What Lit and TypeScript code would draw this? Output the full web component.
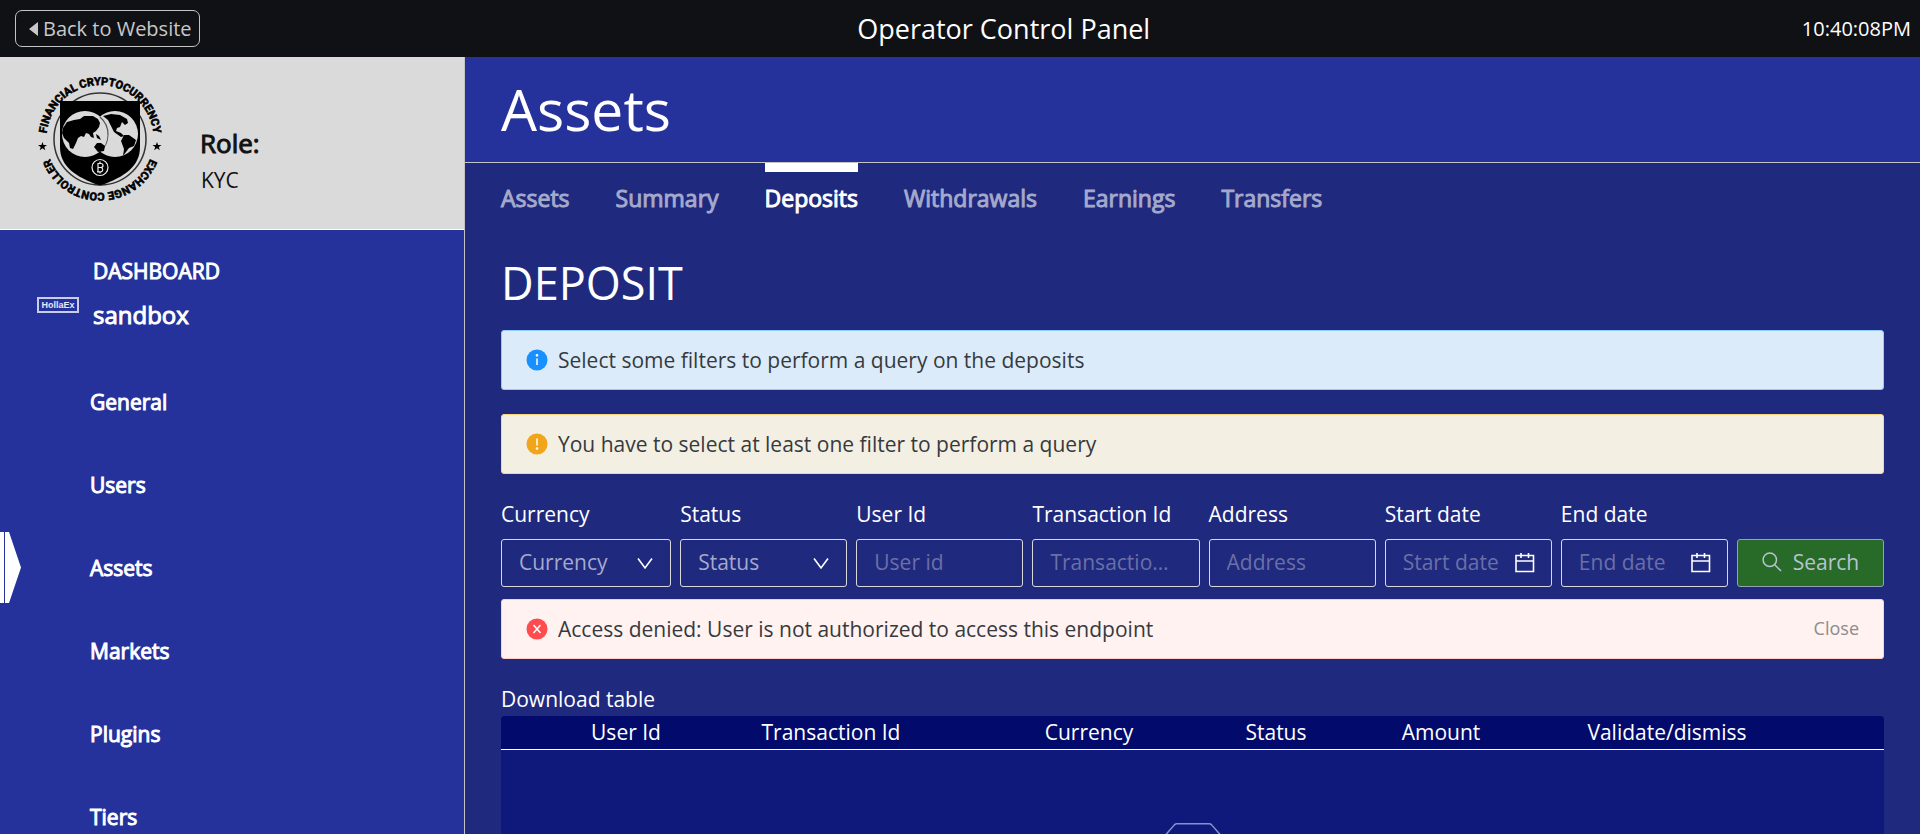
import { LitElement, html, css, svg, nothing } from "lit";
import { customElement, state } from "lit/decorators.js";
import { classMap } from "lit/directives/class-map.js";

const NAV = ["General", "Users", "Assets", "Markets", "Plugins", "Tiers"];
const TABS = ["Assets", "Summary", "Deposits", "Withdrawals", "Earnings", "Transfers"];
const COLUMNS = [
  { title: "", width: 61 },
  { title: "User Id", width: 128 },
  { title: "Transaction Id", width: 282 },
  { title: "Currency", width: 234 },
  { title: "Status", width: 140 },
  { title: "Amount", width: 190 },
  { title: "Validate/dismiss", width: 262 },
  { title: "", width: 86 },
];

type Filter = { id: string; label: string; hint: string; kind: "select" | "text" | "date" };
const FILTERS: Filter[] = [
  { id: "currency", label: "Currency", hint: "Currency", kind: "select" },
  { id: "status", label: "Status", hint: "Status", kind: "select" },
  { id: "user", label: "User Id", hint: "User id", kind: "text" },
  { id: "transaction", label: "Transaction Id", hint: "Transaction Id", kind: "text" },
  { id: "address", label: "Address", hint: "Address", kind: "text" },
  { id: "start", label: "Start date", hint: "Start date", kind: "date" },
  { id: "end", label: "End date", hint: "End date", kind: "date" },
];

const chevron = html`<svg class="glyph" width="18" height="18" viewBox="0 0 18 18" aria-hidden="true">
  <path d="M2 4.5 9 14 16 4.5" fill="none" stroke="#fff" stroke-width="1.6" />
</svg>`;

const calendar = html`<svg class="glyph" width="20" height="20" viewBox="0 0 20 20" aria-hidden="true">
  <path d="M1 2.500H18.500V18.500H1ZM1 8H18.500M6 0V5M13.500 0V5" fill="none" stroke="#fff" stroke-width="1.6" />
</svg>`;

const magnifier = html`<svg width="20" height="20" viewBox="0 0 20 20" aria-hidden="true">
  <path d="M12.700 12.700 19 19M14.500 7.700A6.700 6.700 0 1 1 1.100 7.700 6.700 6.700 0 0 1 14.500 7.700Z" fill="none" stroke="currentColor" stroke-width="1.500" />
</svg>`;

const MARKS = {
  info: svg`<path d="M11 9.500V16" /><circle cx="11" cy="6.300" r=".6" />`,
  warning: svg`<path d="M11 5.500V12.500" /><circle cx="11" cy="15.500" r=".6" />`,
  error: svg`<path d="M7.500 7 14.500 15M14.500 7 7.500 15" />`,
};

const seal = html`<svg class="seal" width="126" height="126" viewBox="0 0 126 126" role="img" aria-label="Exchange seal">
  <defs>
    <path id="ring" d="M10.100 72A53.700 53.700 0 1 1 115.900 72" />
    <path id="ring-low" d="M115.900 54A53.700 53.700 0 1 1 10.100 54" />
  </defs>
  <circle cx="63" cy="63" r="46" fill="none" stroke="#333" stroke-width="1.500" />
  <path d="M23 25H103V71C103 90 88 101 63 109.500 38 101 23 90 23 71Z" fill="#000" />
  <circle cx="48" cy="58" r="23" fill="#dadada" />
  <circle cx="78" cy="58" r="23" fill="#dadada" />
  <path d="M71 59A23 23 0 0 0 63 41" fill="none" stroke="#555" stroke-width="1.200" />
  <path d="M71 59A23 23 0 0 1 63 76" fill="none" stroke="#555" stroke-width="1" />
  <path d="M26 52 30 46 37 44 43 43 47 40 56 40 61 43 63 47 62 51 59 55 56 57 57 62 54 61 52 58 49 57 47 61 44 60 41 62 39 67 36 73 33 72 32 67 27 62 25 57Z" />
  <path d="M57 71 60 67 64 67 68 70 67 75 61 76Z" />
  <path d="M59 58 62 60 64 64 60 62Z" />
  <path d="M66 40 74 38 83 39 90 43 91 47 88 49 85 46 83 51 80 52 79 55 84 57 87 60 84 61 77 56 74 50 71 44Z" />
  <path d="M87 59 92 59 99 64 97 70 92 72 86 80 87 73 84 65Z" />
  <circle cx="63" cy="91.500" r="8" fill="none" stroke="#eee" stroke-width="1.200" />
  <path d="M61 87V96M61 87.500H64A2 2 0 0 1 64 91.500H61M64 91.500A2.200 2.200 0 0 1 64 95.800H60M63 85.500V87M63 96V97.500" fill="none" stroke="#eee" stroke-width="1.200" />
  <path d="M5.500 66 6.600 69H10L7.300 71 8.300 74.200 5.500 72.300 2.700 74.200 3.700 71 1 69H4.400Z" />
  <path d="M120 66 121.100 69H124.500L121.800 71 122.800 74.200 120 72.300 117.200 74.200 118.200 71 115.500 69H118.900Z" />
  <text text-anchor="middle"><textPath href="#ring" startOffset="50%">FINANCIAL CRYPTOCURRENCY</textPath></text>
  <text text-anchor="middle"><textPath href="#ring-low" startOffset="50%">EXCHANGE CONTROLLER</textPath></text>
</svg>`;

@customElement("app-root")
export class AppRoot extends LitElement {
  @state() private page = "Assets";
  @state() private tab = "Deposits";
  @state() private errorShown = true;

  static styles = css`
    :host {
      display: flex;
      flex-direction: column;
      height: 100vh;
      overflow: hidden;
      background: #1f297e;
      color: #fff;
      font: 400 21px/32px "Open Sans", "Noto Sans", sans-serif;
    }
    * { box-sizing: border-box; }
    h1, h2, p { margin: 0; font-weight: 400; }
    a { color: inherit; text-decoration: none; }
    button, input, select { font: inherit; color: inherit; margin: 0; }

    .topbar {
      flex: none;
      display: flex;
      align-items: center;
      justify-content: space-between;
      height: 57px;
      padding: 0 9px 0 15px;
      background: #101115;
    }
    .back {
      display: flex;
      align-items: center;
      gap: 5px;
      height: 37px;
      padding: 0 7px 0 13px;
      border: 1px solid #c4c4c4;
      border-radius: 7px;
      color: #c8c8c8;
      font-size: 20px;
    }
    .brand { padding-left: 6px; font-size: 27px; }
    .clock { font-size: 20px; }

    .frame { flex: 1; min-height: 0; display: flex; }
    .side {
      flex: none;
      width: 465px;
      overflow: hidden;
      border-right: 1px solid #c4c4c4;
      background: #26329b;
    }
    .role {
      display: flex;
      gap: 37px;
      height: 173px;
      padding: 19px 37px;
      border-bottom: 1px solid #fff;
      background: #dadada;
      color: #111;
    }
    .seal text { font: 700 11px "Roboto", sans-serif; stroke: #000; stroke-width: .6px; }
    .who { padding-top: 49px; }
    .who strong { display: block; font-size: 26px; font-weight: 400; line-height: 36px; -webkit-text-stroke: 1px; }
    .who span { display: block; padding-left: 1px; line-height: 38px; }
    .heavy { -webkit-text-stroke: 1px; }
    .site { display: flex; align-items: center; gap: 14px; height: 130px; padding: 0 37px; }
    .site p { line-height: 44px; }
    .site .name { font-size: 24px; }
    .titles { padding-bottom: 4px; }
    .badge {
      margin-top: 20px;
      padding: 0 2px;
      border: 2px solid #c9cdea;
      color: #e6e8f6;
      font: 700 9px/12px "Liberation Sans", sans-serif;
      width: 42px;
      text-align: center;
      white-space: nowrap;
    }
    .nav a { display: flex; align-items: center; height: 83px; padding-left: 90px; position: relative; }
    .nav svg { position: absolute; left: 0; }

    .main { flex: 1; min-width: 0; overflow: hidden; }
    .title { padding: 14px 36px 15px; border-bottom: 1px solid #c4c4c4; background: #26329b; font-size: 57px; line-height: 76px; }
    .tabs { display: flex; gap: 46px; padding: 0 36px; font-size: 23px; }
    .tabs a { padding-top: 10px; border-top: 9px solid transparent; color: #a5a9cb; }
    .tabs a.on { border-color: #fff; color: #fff; }
    .content { padding: 37px 36px 0; }
    .content h2 { font-size: 45px; line-height: 64px; margin-bottom: 15px; }

    .note {
      display: flex;
      align-items: center;
      gap: 10px;
      height: 60px;
      padding: 0 24px;
      border: 1px solid;
      border-radius: 3px;
      color: #363a40;
    }
    .note + .note { margin-top: 24px; }
    .note svg { stroke: #fff; stroke-width: 1.500px; }
    .info { background: #dcebf9; border-color: #91caff; }
    .warning { background: #f3efe2; border-color: #fbd77c; }
    .error { background: #fff2f0; border-color: #ffccc7; margin-top: 12px; }
    .close { margin-left: auto; padding: 0 0 2px; border: 0; background: none; color: #8c8c8c; font-size: 18px; }

    .filters {
      display: grid;
      grid-template-columns: 170fr repeat(6, 167fr) 147px;
      align-items: end;
      gap: 9px;
      margin-top: 24px;
    }
    .field { min-width: 0; }
    .field label { display: block; margin-bottom: 9px; }
    .box { position: relative; display: flex; align-items: center; }
    .box input, .box select {
      width: 100%;
      height: 48px;
      padding: 0 24px 2px 17px;
      border: 1px solid #d9d9d9;
      border-radius: 3px;
      background: transparent;
      appearance: none;
      text-overflow: ellipsis;
    }
    .box select { color: #a5a9cb; }
    .box input::placeholder { color: #6a70a6; opacity: 1; }
    .box .date { padding-right: 44px; }
    .glyph { position: absolute; right: 17px; pointer-events: none; }
    .search {
      display: flex;
      align-items: center;
      justify-content: center;
      gap: 11px;
      height: 48px;
      padding: 0 0 2px;
      border: 1px solid #93a3b3;
      border-radius: 3px;
      background: #286a28;
      color: #b8c4cf;
    }

    .download { display: block; margin-top: 24px; }
    table { width: 100%; margin-top: 1px; table-layout: fixed; border-collapse: separate; border-spacing: 0; background: #0f197b; border-radius: 4px 4px 0 0; overflow: hidden; }
    th { height: 34px; padding: 0 0 1px; border-bottom: 1px solid #fff; background: #020b6b; font-weight: 400; line-height: 30px; white-space: nowrap; }
    td { padding: 72px 0; text-align: center; }
  `;

  private note(kind: keyof typeof MARKS, text: string) {
    const fill = { info: "#1890ff", warning: "#f0a51b", error: "#ff4d4f" }[kind];
    return html`<div class="note ${kind}" role="alert">
      <svg width="22" height="22" viewBox="0 0 22 22" aria-hidden="true">
        <circle cx="11" cy="11" r="10.500" fill=${fill} stroke="none" />${MARKS[kind]}
      </svg>
      <span>${text}</span>
      ${kind === "error"
        ? html`<button class="close" @click=${() => (this.errorShown = false)}>Close</button>`
        : nothing}
    </div>`;
  }

  private field(f: Filter) {
    return html`<div class="field">
      <label for=${f.id}>${f.label}</label>
      <div class="box">
        ${f.kind === "select"
          ? html`<select id=${f.id}><option>${f.hint}</option></select>${chevron}`
          : html`<input id=${f.id} class=${f.kind} type="text" placeholder=${f.hint} />`}
        ${f.kind === "date" ? calendar : nothing}
      </div>
    </div>`;
  }

  render() {
    return html`
      <header class="topbar">
        <a class="back" href="#website">
          <svg width="9" height="14" viewBox="0 0 9 14" aria-hidden="true"><path d="M9 0V14L0 7Z" fill="currentColor" /></svg>
          Back to Website
        </a>
        <div class="brand">Operator Control Panel</div>
        <time class="clock">10:40:08PM</time>
      </header>
      <div class="frame">
        <aside class="side">
          <div class="role">
            ${seal}
            <div class="who"><strong>Role:</strong><span>KYC</span></div>
          </div>
          <div class="site">
            <div class="badge">HollaEx</div>
            <div class="titles heavy"><p>DASHBOARD</p><p class="name">sandbox</p></div>
          </div>
          <nav class="nav heavy">
            ${NAV.map(
              (n) => html`<a href="#${n}" @click=${() => (this.page = n)}>
                ${n === this.page
                  ? html`<svg width="21" height="71" viewBox="0 0 21 71" aria-hidden="true"><path d="M0 0H4V71H0ZM5 0H9L21 35.500 9 71H5Z" fill="#fff" stroke="none" /></svg>`
                  : nothing}${n}</a>`
            )}
          </nav>
        </aside>
        <main class="main">
          <h1 class="title">Assets</h1>
          <nav class="tabs heavy">
            ${TABS.map(
              (t) => html`<a href="#${t}" class=${classMap({ on: t === this.tab })} @click=${() => (this.tab = t)}>${t}</a>`
            )}
          </nav>
          <section class="content">
            <h2>DEPOSIT</h2>
            ${this.note("info", "Select some filters to perform a query on the deposits")}
            ${this.note("warning", "You have to select at least one filter to perform a query")}
            <form class="filters" @submit=${(e: Event) => e.preventDefault()}>
              ${FILTERS.map((f) => this.field(f))}
              <button class="search">${magnifier}Search</button>
            </form>
            ${this.errorShown
              ? this.note("error", "Access denied: User is not authorized to access this endpoint")
              : nothing}
            <a class="download" href="#download">Download table</a>
            <table>
              <colgroup>${COLUMNS.map((c) => html`<col width=${c.width} />`)}</colgroup>
              <thead><tr>${COLUMNS.map((c) => html`<th>${c.title}</th>`)}</tr></thead>
              <tbody><tr><td colspan="8">
                <svg width="96" height="62" viewBox="0 0 64 41" aria-label="No data">
                  <g transform="translate(0 1)" fill="none" stroke="#7f96cc">
                    <path d="M55 12.760 44.854 1.258C44.367.474 43.656 0 42.907 0H21.093c-.749 0-1.460.474-1.947 1.257L9 12.761V22h46v-9.240z" />
                    <path d="M41.613 15.931c0-1.605.994-2.930 2.227-2.931H55v18.137C55 33.260 53.680 35 52.050 35h-40.100C10.320 35 9 33.259 9 31.137V13h11.160c1.233 0 2.227 1.323 2.227 2.928v.022c0 1.605 1.005 2.901 2.237 2.901h14.752c1.232 0 2.237-1.308 2.237-2.913v-.007z" />
                  </g>
                </svg>
              </td></tr></tbody>
            </table>
          </section>
        </main>
      </div>
    `;
  }
}
